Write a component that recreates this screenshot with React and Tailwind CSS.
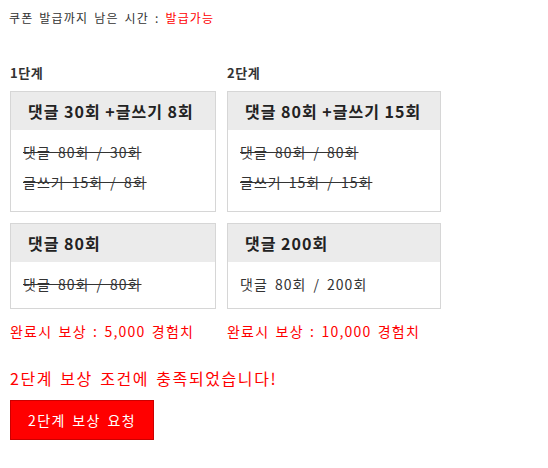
export default function App() {
  const font = { fontFamily: '"Noto Sans CJK KR", "Noto Sans", sans-serif' };
  const Card = ({ title, rows, tall }) => (
    <div className="h-full border border-[#d6d6d6] bg-white flex flex-col">
      <div className="h-[38px] shrink-0 bg-[#ebebeb] flex items-center pl-[17px] text-[16px] font-bold text-[#222] tracking-[1px]">
        {title}
      </div>
      <div className={`flex flex-col pl-[12px] ${tall ? "pt-[12px] gap-[10px]" : "pt-[12px]"}`}>
        {rows.map((r, i) => (
          <div
            key={i}
            className={`h-[20px] leading-[20px] text-[14px] text-[#333] tracking-[1px] [word-spacing:3px] ${r.done ? "line-through" : ""}`}
          >
            {r.text}
          </div>
        ))}
      </div>
    </div>
  );
  return (
    <div className="w-[548px] h-[468px] bg-white pl-[10px]" style={font}>
      <div className="pt-[9px] h-[27px] text-[12px] leading-[18px] text-[#333] tracking-[1.2px] [word-spacing:2px] -ml-[1px]">
        쿠폰 발급까지 남은 시간 : <span className="text-[#ff0000]">발급가능</span>
      </div>
      <div className="mt-[38px] grid grid-cols-[206px_214px] gap-x-[11px]">
        <div className="text-[13px] font-bold leading-[16px] h-[26px] text-[#333] tracking-[0.5px]">1단계</div>
        <div className="text-[13px] font-bold leading-[16px] h-[26px] text-[#333] tracking-[0.5px]">2단계</div>
        <div className="h-[121px]">
          <Card
            tall
            title="댓글 30회 +글쓰기 8회"
            rows={[
              { text: "댓글 80회 / 30회", done: true },
              { text: "글쓰기 15회 / 8회", done: true },
            ]}
          />
        </div>
        <div className="h-[121px]">
          <Card
            tall
            title="댓글 80회 +글쓰기 15회"
            rows={[
              { text: "댓글 80회 / 80회", done: true },
              { text: "글쓰기 15회 / 15회", done: true },
            ]}
          />
        </div>
        <div className="mt-[11px] h-[86px]">
          <Card title="댓글 80회" rows={[{ text: "댓글 80회 / 80회", done: true }]} />
        </div>
        <div className="mt-[11px] h-[86px]">
          <Card title="댓글 200회" rows={[{ text: "댓글 80회 / 200회", done: false }]} />
        </div>
        <div className="mt-[12px] text-[14px] leading-[20px] text-[#ff0000] tracking-[1.2px] [word-spacing:2px] whitespace-nowrap">완료시 보상 : 5,000 경험치</div>
        <div className="mt-[12px] text-[14px] leading-[20px] text-[#ff0000] tracking-[1.2px] [word-spacing:2px] whitespace-nowrap">완료시 보상 : 10,000 경험치</div>
      </div>
      <div className="mt-[26px] text-[16px] leading-[22px] text-[#ff0000] tracking-[1.6px] [word-spacing:2px]">2단계 보상 조건에 충족되었습니다!</div>
      <button className="mt-[11px] w-[144px] h-[40px] bg-[#ff0000] border border-[#cc0000] text-white text-[14px] tracking-[1.4px] [word-spacing:2px] flex items-center justify-center">
        2단계 보상 요청
      </button>
    </div>
  );
}
